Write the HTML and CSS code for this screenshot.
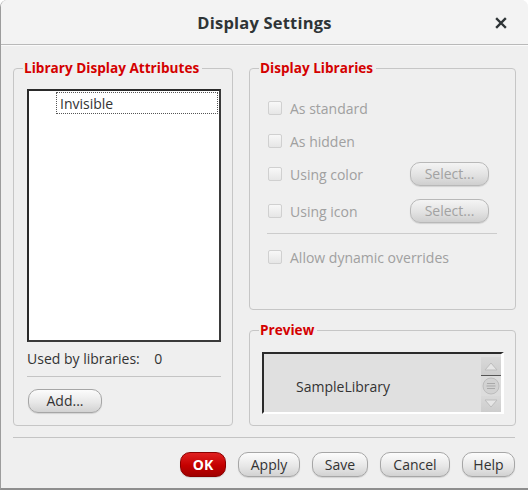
FILE: index.html
```html
<!DOCTYPE html>
<html>
<head>
<meta charset="utf-8">
<link rel="stylesheet" href="styles.css">
</head>
<body>
<div class="window">
  <div class="titlebar">
    <span class="title">Display Settings</span>
    <svg class="close" width="12" height="12" viewBox="0 0 12 12"><path d="M2 2 L10 10 M10 2 L2 10" stroke="#2e3436" stroke-width="2.4" stroke-linecap="square"/></svg>
  </div>
  <div class="content">
    <div class="main">
      <fieldset class="group left">
        <legend>Library Display Attributes</legend>
        <div class="list">
          <div class="item">Invisible</div>
        </div>
        <div class="used">Used by libraries:&nbsp;&nbsp;&nbsp;&nbsp;0</div>
        <div class="sep"></div>
        <button class="btn add">Add...</button>
      </fieldset>
      <div class="rightcol">
        <fieldset class="group libs">
          <legend>Display Libraries</legend>
          <div class="row r1"><span class="cb"></span><span>As standard</span></div>
          <div class="row r2"><span class="cb"></span><span>As hidden</span></div>
          <div class="row r3"><span class="cb"></span><span class="lbl">Using color</span><button class="btn sel" disabled>Select...</button></div>
          <div class="row r4"><span class="cb"></span><span class="lbl">Using icon</span><button class="btn sel" disabled>Select...</button></div>
          <div class="sep sep2"></div>
          <div class="row r5"><span class="cb"></span><span>Allow dynamic overrides</span></div>
        </fieldset>
        <fieldset class="group preview">
          <legend>Preview</legend>
          <div class="pbox">
            <div class="ptext">SampleLibrary</div>
            <div class="scroll">
              <div class="sb up"><svg width="14" height="10" viewBox="0 0 14 10"><path d="M1 9 L7 2 L13 9 Z" fill="#e6e6e6" stroke="#bdbdbd"/></svg></div>
              <div class="sb thumb"><svg width="18" height="18" viewBox="0 0 18 18"><circle cx="9" cy="9" r="8" fill="#d2d2d2" stroke="#bdbdbd"/><path d="M5 6.5 H13 M4.5 9 H13.5 M5 11.5 H13" stroke="#a9a9a9" stroke-width="1"/></svg></div>
              <div class="sb down"><svg width="14" height="10" viewBox="0 0 14 10"><path d="M1 1 L7 8 L13 1 Z" fill="#e6e6e6" stroke="#bdbdbd"/></svg></div>
            </div>
          </div>
        </fieldset>
      </div>
    </div>
    <div class="sep bottomsep"></div>
    <div class="buttons">
      <button class="btn ok">OK</button>
      <button class="btn apply">Apply</button>
      <button class="btn save">Save</button>
      <button class="btn cancel">Cancel</button>
      <button class="btn help">Help</button>
    </div>
  </div>
</div>
</body>
</html>
```

FILE: styles.css
```css
* { box-sizing: border-box; }
html, body { margin: 0; padding: 0; }
body {
  width: 528px;
  height: 490px;
  overflow: hidden;
  background: #ffffff;
  font-family: "Open Sans", "DejaVu Sans", sans-serif;
  font-size: 14px;
  color: #2e2e2e;
}
.window {
  width: 528px;
  height: 490px;
  background: #efefef;
  border-left: 1px solid #9c9c9c;
  border-bottom: 2px solid #8e8e8e;
  border-top-left-radius: 7px;
  border-top-right-radius: 7px;
  overflow: hidden;
}
.titlebar {
  height: 45px;
  background: #f3f3f3;
  border-bottom: 1px solid #b9b9b9;
  box-shadow: 0 1px 0 #fafafa;
  display: flex;
  align-items: center;
  justify-content: center;
  position: relative;
}
.title {
  font-family: "Open Sans", sans-serif;
  font-weight: bold;
  font-size: 16.5px;
  letter-spacing: 0.2px;
  color: #2e3436;
  margin-top: 1px;
}
.close {
  position: absolute;
  right: 21px;
  top: 17px;
}
.content {
  padding: 15px 12px 0 12px;
}
.main {
  display: flex;
  gap: 16px;
  align-items: flex-start;
}
.group {
  margin: 0;
  border: 1px solid #c6c6c6;
  border-radius: 4px;
  min-width: 0;
}
.group legend {
  color: #d40000;
  font-weight: bold;
  font-size: 13.6px;
  line-height: 16px;
  padding: 0 3px 0 1px;
}
.left {
  width: 220px;
  height: 366px;
  padding: 0 11px 11px 13px;
  display: flex;
  flex-direction: column;
}
.left legend { margin-left: -4px; }
.list {
  margin-top: 13px;
  width: 194px;
  height: 253px;
  background: #ffffff;
  border-top: 2px solid #2a2a2a;
  border-left: 2px solid #2a2a2a;
  border-right: 2px solid #3a3a3a;
  border-bottom: 2px solid #3a3a3a;
  padding: 1px 1px 0 27px;
}
.item {
  height: 22px;
  line-height: 20px;
  padding-top: 1px;
  border: 1px dotted #555;
  padding-left: 3px;
  color: #333;
}
.used {
  margin-top: 8px;
  line-height: 18px;
  color: #333;
}
.sep {
  height: 1px;
  background: #c4c4c4;
  width: 194px;
  margin-top: 8px;
}
.btn {
  font-family: "Open Sans", sans-serif;
  font-size: 14px;
  color: #333;
  height: 24px;
  padding: 0;
  border: 1px solid #a6a6a6;
  border-radius: 10px;
  background: linear-gradient(#fcfcfc, #e8e8e8 55%, #d2d2d2);
  box-shadow: 0 1px 1px rgba(0,0,0,0.12);
  line-height: 20px;
}
.add {
  align-self: flex-start;
  margin-top: 12px;
  margin-left: 1px;
  width: 74px;
}
.rightcol {
  width: 267px;
  display: flex;
  flex-direction: column;
  gap: 12px;
}
.libs {
  height: 250px;
  padding: 0 17px 0 18px;
  color: #a0a0a0;
}
.libs legend { margin-left: -9px; }
.row {
  display: flex;
  align-items: center;
  height: 24px;
}
.r1 { margin-top: 20px; }
.r2 { margin-top: 9px; }
.r3 { margin-top: 9px; }
.r4 { margin-top: 13px; }
.r5 { margin-top: 11px; }
.cb {
  width: 14px;
  height: 14px;
  border: 1px solid #d0d0d0;
  border-radius: 2px;
  background: linear-gradient(#f8f8f8, #e6e6e6);
  margin-right: 8px;
  flex: none;
}
.lbl { width: 120px; }
.sel {
  width: 79px;
  height: 24px;
  color: #a2a2a2;
  border-color: #b8b8b8;
  background: linear-gradient(#f4f4f4, #e2e2e2 55%, #cfcfcf);
}
.sep2 {
  width: 230px;
  margin-top: 10px;
  margin-left: -1px;
  background: #cccccc;
}
.preview {
  height: 104px;
  padding: 0 12px 10px 12px;
}
.preview legend { margin-left: -3px; }
.pbox {
  margin-top: 14px;
  width: 242px;
  height: 62px;
  background: #e0e0e0;
  border-top: 2px solid #2a2a2a;
  border-left: 2px solid #2a2a2a;
  border-right: 3px solid #ffffff;
  border-bottom: 2px solid #ffffff;
  display: flex;
}
.ptext {
  flex: 1;
  padding-left: 32px;
  padding-top: 24px;
  color: #333;
  line-height: 18px;
}
.scroll {
  width: 20px;
  display: flex;
  flex-direction: column;
  padding-top: 3px;
}
.sb {
  display: flex;
  align-items: center;
  justify-content: center;
  background: linear-gradient(#d9d9d9, #cdcdcd);
}
.up { height: 19px; border-bottom: 1px solid #555; }
.thumb { height: 20px; background: #dcdcdc; }
.down { height: 16px; }
.bottomsep {
  width: 502px;
  margin-top: 11px;
  background: #c4c4c4;
}
.buttons {
  display: flex;
  justify-content: flex-end;
  gap: 12px;
  margin-top: 14px;
  padding-right: 1px;
}
.buttons .btn { height: 25px; }
.apply { width: 62px; }
.save { width: 56px; }
.cancel { width: 70px; }
.help { width: 53px; }
.buttons .ok {
  width: 46px;
  color: #ffffff;
  font-weight: bold;
  border-color: #8a0000;
  background: linear-gradient(#e02020, #c40000 55%, #a00000);
}
```
